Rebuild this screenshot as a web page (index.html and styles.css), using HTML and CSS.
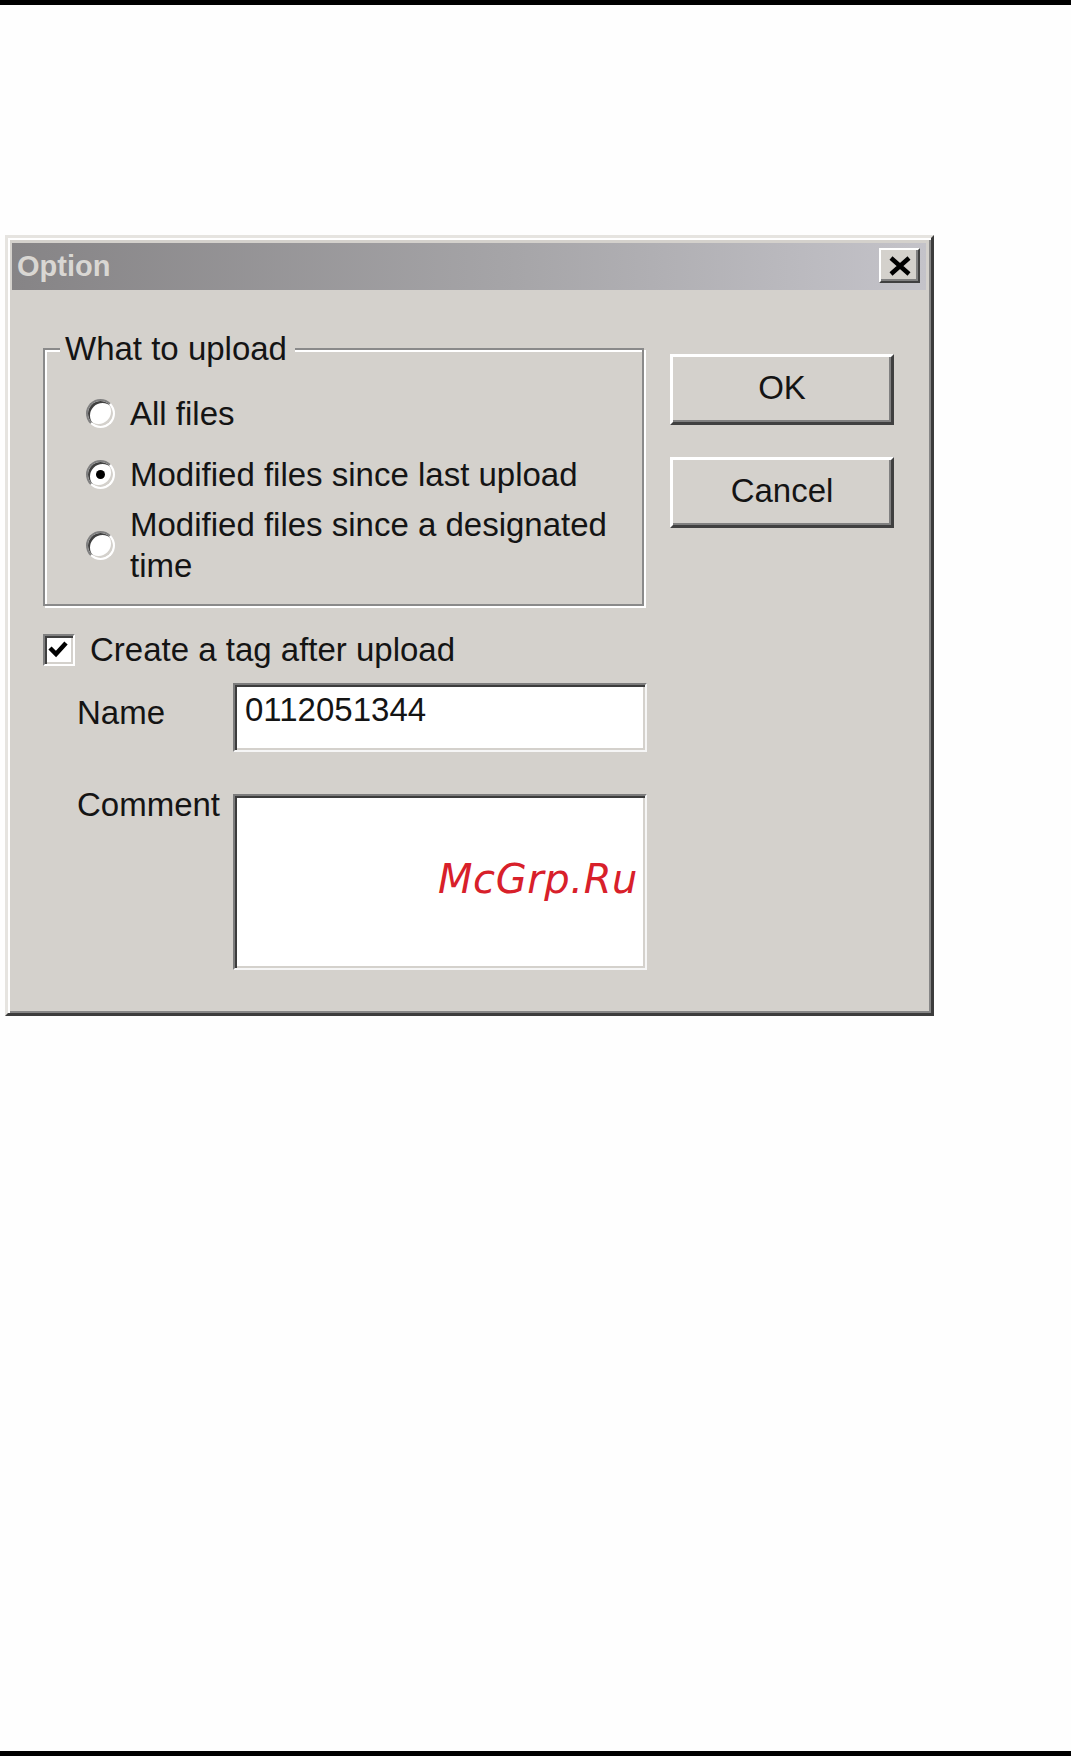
FILE: index.html
```html
<!DOCTYPE html>
<html lang="en">
<head>
<meta charset="utf-8">
<title>Option</title>
<link rel="stylesheet" href="styles.css">
</head>
<body>
<div class="rule"></div>
<main class="page">
  <div class="dialog">
    <div class="titlebar">
      <span class="title">Option</span>
      <span class="close">
        <svg width="24" height="20" viewBox="0 0 24 20"><path d="M3 2 L21 18 M21 2 L3 18" stroke="#000" stroke-width="4.5" fill="none"/></svg>
      </span>
    </div>
    <div class="dlg-body">
      <div class="left">
        <fieldset class="group">
          <legend>What to upload</legend>
          <div class="opt"><span class="radio"></span><span class="opt-label">All files</span></div>
          <div class="opt opt2"><span class="radio checked"></span><span class="opt-label">Modified files since last upload</span></div>
          <div class="opt opt3"><span class="radio"></span><span class="opt-label">Modified files since a designated time</span></div>
        </fieldset>
        <div class="check-row">
          <span class="checkbox">
            <svg width="28" height="28" viewBox="0 0 28 28"><path d="M5 12 L11 18 L21 7" stroke="#000" stroke-width="4.5" fill="none"/></svg>
          </span>
          <span>Create a tag after upload</span>
        </div>
        <div class="form">
          <div class="lbl lbl-name">Name</div>
          <div class="field name-field">0112051344</div>
          <div class="lbl lbl-comment">Comment</div>
          <div class="field comment-field"><div class="watermark">McGrp.Ru</div></div>
        </div>
      </div>
      <div class="buttons">
        <button class="btn">OK</button>
        <button class="btn">Cancel</button>
      </div>
    </div>
  </div>
</main>
<div class="rule"></div>
</body>
</html>
```
FILE: styles.css
```css
html, body {
  margin: 0;
  padding: 0;
}
body {
  height: 1756px;
  display: flex;
  flex-direction: column;
  background: #fefefe;
  font-family: "Liberation Sans", Arial, sans-serif;
  color: #141414;
}
.rule {
  height: 5px;
  background: #000;
  flex: none;
}
.page {
  flex: 1;
  padding: 230px 0 0 5px;
}
.dialog {
  width: 929px;
  box-sizing: border-box;
  border: 3px solid;
  border-color: #e6e4e0 #3c3c3c #3c3c3c #e6e4e0;
  box-shadow: inset 2px 2px 0 #ffffff, inset -2px -2px 0 #868686;
  background: #d4d1cc;
  padding: 5px 5px 0 4px;
}
.titlebar {
  height: 47px;
  display: flex;
  align-items: center;
  justify-content: space-between;
  padding: 0 6px 0 5px;
  background: linear-gradient(90deg, #868486 0%, #a6a5a8 55%, #c4c3c9 100%);
}
.title {
  font-weight: bold;
  font-size: 29px;
  line-height: 1;
  color: #d9d7d3;
}
.close {
  width: 41px;
  height: 35px;
  box-sizing: border-box;
  border: 2px solid;
  border-color: #ffffff #404040 #404040 #ffffff;
  box-shadow: inset -2px -2px 0 #808080;
  background: #d4d1cc;
  display: flex;
  align-items: center;
  justify-content: center;
  margin-bottom: 2px;
}
.dlg-body {
  display: flex;
  align-items: flex-start;
  padding: 40px 0 43px 31px;
}
.left {
  width: 604px;
  flex: none;
}
.group {
  margin: 0;
  width: 601px;
  box-sizing: border-box;
  border: 2px solid #8a8a8a;
  box-shadow: inset 2px 2px 0 #ffffff, 2px 2px 0 #ffffff;
  padding: 26px 10px 18px 15px;
  min-inline-size: 0;
}
.group legend {
  padding: 0 8px 0 5px;
  font-size: 33px;
  line-height: 37px;
  background: #d4d1cc;
}
.opt {
  display: flex;
  align-items: center;
  gap: 15px;
  margin-left: 26px;
}
.opt2 { margin-top: 20px; }
.opt3 { margin-top: 9px; }
.opt-label {
  font-size: 33px;
  line-height: 41px;
  max-width: 490px;
}
.radio {
  flex: none;
  width: 29px;
  height: 29px;
  box-sizing: border-box;
  border-radius: 50%;
  background: #ffffff;
  border: 2px solid;
  border-color: #808080 #ffffff #ffffff #808080;
  box-shadow: inset 2px 2px 0 #404040, inset -2px -2px 0 #d4d1cc;
  display: flex;
  align-items: center;
  justify-content: center;
}
.radio.checked::after {
  content: "";
  width: 9px;
  height: 9px;
  border-radius: 50%;
  background: #000;
}
.check-row {
  display: flex;
  align-items: center;
  gap: 15px;
  margin-top: 23px;
  font-size: 33px;
  line-height: 41px;
}
.checkbox {
  flex: none;
  width: 32px;
  height: 32px;
  box-sizing: border-box;
  background: #ffffff;
  border: 2px solid;
  border-color: #808080 #ffffff #ffffff #808080;
  box-shadow: inset 2px 2px 0 #404040, inset -2px -2px 0 #d4d1cc;
  display: flex;
  align-items: center;
  justify-content: center;
}
.form {
  display: grid;
  grid-template-columns: 156px 414px;
  row-gap: 42px;
  margin: 13px 0 0 34px;
  font-size: 33px;
  line-height: 41px;
}
.lbl { align-self: start; }
.lbl-name { margin-top: 9px; }
.lbl-comment { margin-top: -10px; }
.field {
  box-sizing: border-box;
  background: #ffffff;
  border: 2px solid;
  border-color: #7c7c7c #f6f6f6 #f6f6f6 #7c7c7c;
  box-shadow: inset 2px 2px 0 #3c3c3c, inset -2px -2px 0 #d4d1cc;
}
.name-field {
  height: 69px;
  padding: 4px 10px 0 10px;
}
.comment-field {
  height: 176px;
  padding: 63px 7px 0 0;
}
.watermark {
  font-family: "DejaVu Sans", Verdana, sans-serif;
  font-style: oblique;
  font-size: 40px;
  line-height: 40px;
  letter-spacing: 0.6px;
  color: #d8202a;
  text-align: right;
}
.buttons {
  display: flex;
  flex-direction: column;
  gap: 32px;
  margin: 24px 0 0 23px;
}
.btn {
  width: 224px;
  height: 71px;
  box-sizing: border-box;
  border: 3px solid;
  border-color: #ffffff #404040 #404040 #ffffff;
  box-shadow: inset -2px -2px 0 #808080;
  background: #d4d1cc;
  font-family: "Liberation Sans", Arial, sans-serif;
  font-size: 33px;
  line-height: 41px;
  color: #141414;
  padding: 0 0 4px 0;
  margin: 0;
}
```
